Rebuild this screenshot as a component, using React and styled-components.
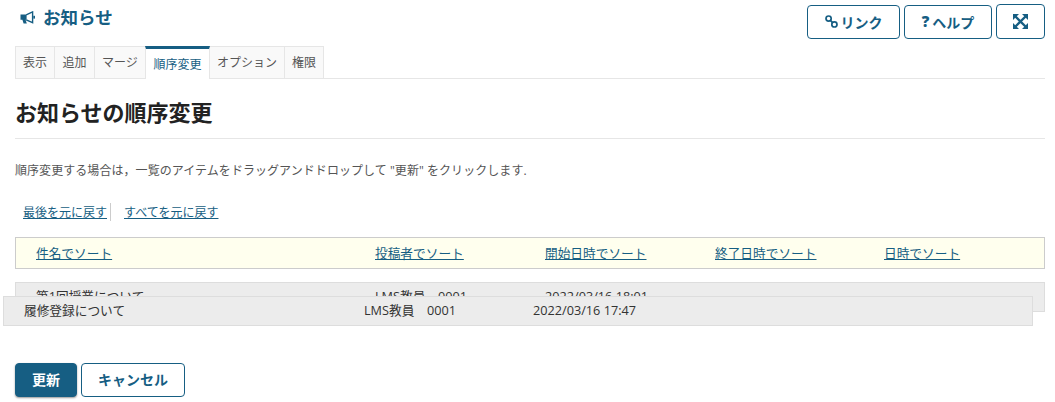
import React from "react";
import styled, { createGlobalStyle } from "styled-components";

const BLUE = "#165e83";

const Global = createGlobalStyle`
  html, body { margin: 0; padding: 0; background: #fff; }
  body {
    font-family: "Open Sans", "Noto Sans CJK JP", sans-serif;
    font-size: 13px;
    color: #333;
  }
  * { box-sizing: border-box; }
`;

const Page = styled.div`
  position: relative;
  width: 1055px;
  height: 402px;
  padding: 0 10px 0 15px;
  overflow: hidden;
`;

const TopBar = styled.header`
  display: flex;
  justify-content: space-between;
  align-items: flex-start;
  height: 46px;
`;

const Title = styled.h1`
  display: flex;
  align-items: center;
  gap: 8px;
  margin: 4px 0 0 5px;
  font-size: 17.5px;
  line-height: 26px;
  font-weight: 700;
  color: ${BLUE};
`;

const TopActions = styled.div`
  display: flex;
  gap: 4px;
  align-items: flex-start;
  padding-top: 4px;
`;

const TopButton = styled.a`
  display: flex;
  align-items: center;
  justify-content: center;
  gap: ${(p) => p.$gap ?? 3}px;
  width: ${(p) => p.$w}px;
  height: ${(p) => p.$h || 34}px;
  margin-top: ${(p) => p.$mt || 0}px;
  padding-bottom: 1px;
  border: 1px solid ${BLUE};
  border-radius: 4px;
  color: ${BLUE};
  font-size: 14px;
  font-weight: 700;
`;

const Question = styled.span`
  font-family: "Open Sans", sans-serif;
  font-weight: 800;
  font-size: 15px;
  line-height: 1;
`;

const Tabs = styled.nav`
  display: flex;
  height: 33px;
  border-bottom: 1px solid #e6e6e6;
`;

const Tab = styled.a`
  position: relative;
  z-index: ${(p) => (p.$active ? 1 : 0)};
  display: flex;
  align-items: center;
  justify-content: center;
  width: ${(p) => p.$w}px;
  height: ${(p) => (p.$active ? 33 : 32)}px;
  margin-left: -1px;
  padding-bottom: ${(p) => (p.$active ? 0 : 1)}px;
  font-size: 12px;
  color: ${(p) => (p.$active ? BLUE : "#555")};
  background: ${(p) => (p.$active ? "#fff" : "#f9f9f9")};
  border: 1px solid #e6e6e6;
  border-bottom: 0;
  border-top: ${(p) => (p.$active ? `3px solid ${BLUE}` : "1px solid #e6e6e6")};
  &:first-child { margin-left: 0; }
`;

const Heading = styled.h2`
  margin: 0;
  height: 60px;
  padding-top: 17px;
  font-size: 22px;
  line-height: 32px;
  font-weight: 700;
  color: #222;
  border-bottom: 1px solid #e6e6e6;
`;

const Intro = styled.p`
  margin: 23px 0 0;
  font-size: 12px;
  line-height: 18px;
  letter-spacing: 0.06px;
  color: #555;
  height: 18px;
`;

const LinkRow = styled.div`
  display: flex;
  align-items: center;
  height: 18px;
  margin-top: 23px;
  padding-left: 8px;
  font-size: 12px;
`;

const TextLink = styled.a`
  color: ${BLUE};
  text-decoration: underline;
  padding-right: ${(p) => (p.$sep ? 3 : 0)}px;
  margin-right: ${(p) => (p.$sep ? 13 : 0)}px;
  border-right: ${(p) => (p.$sep ? "1px solid #ccc" : "none")};
`;

const COLS = "339px 170px 170px 169px 1fr";

const SortHeader = styled.div`
  display: grid;
  grid-template-columns: ${COLS};
  align-items: center;
  height: 32px;
  margin-top: 16px;
  padding: 0 0 2px 20px;
  background: #ffffee;
  border: 1px solid #ccc;
`;

const SortLink = styled.a`
  color: ${BLUE};
  font-size: 12.7px;
  text-decoration: underline;
`;

const ItemList = styled.div`
  height: 81px;
  padding-top: 13px;
`;

const Item = styled.div`
  display: grid;
  grid-template-columns: ${COLS};
  align-items: center;
  height: 30px;
  padding: 0 0 3px 20px;
  background: #ececec;
  border: 1px solid #ddd;
  font-size: 12.7px;
  color: #333;
`;

const DraggedItem = styled(Item)`
  position: absolute;
  left: 3px;
  top: 296px;
  width: 1030px;
  grid-template-columns: 340px 169px 170px 169px 1fr;
`;

const Actions = styled.div`
  display: flex;
  gap: 4px;
  margin-top: 13px;
`;

const Primary = styled.button`
  width: 62px;
  height: 34px;
  padding: 0 0 2px;
  border: 1px solid ${BLUE};
  border-radius: 4px;
  background: ${BLUE};
  color: #fff;
  font: 700 14px "Open Sans", "Noto Sans CJK JP", sans-serif;
  box-shadow: 0 1px 2px rgba(0, 0, 0, 0.4);
`;

const Secondary = styled.button`
  width: 104px;
  height: 34px;
  padding: 0 0 2px;
  border: 1px solid ${BLUE};
  border-radius: 4px;
  background: #fff;
  color: ${BLUE};
  font: 700 14px "Open Sans", "Noto Sans CJK JP", sans-serif;
`;

const BullhornIcon = () => (
  <svg width="15" height="13" viewBox="0 0 15 13" fill="none">
    <path d="M0.5 3.6H6.6V8.8H5.6L6.8 12.6H3.6L2.4 8.8H0.5Z" fill={BLUE} />
    <path d="M6.2 3.8L12.6 0.9V11.7L6.2 8.8" stroke={BLUE} strokeWidth="1.4" />
    <rect x="13.3" y="4.8" width="1.7" height="2.8" fill={BLUE} />
  </svg>
);

const LinkIcon = () => (
  <svg width="13" height="13" viewBox="0 0 13 13" fill="none" stroke={BLUE} strokeWidth="1.7">
    <circle cx="3.6" cy="3.6" r="2.6" />
    <circle cx="9.4" cy="9.4" r="2.6" />
    <path d="M5.4 5.4L7.6 7.6" />
  </svg>
);

const ExpandIcon = () => (
  <svg width="15" height="15" viewBox="0 0 15 15" fill={BLUE} stroke="none">
    <path d="M0 0H6L0 6Z" />
    <path d="M15 0H9L15 6Z" />
    <path d="M0 15H6L0 9Z" />
    <path d="M15 15H9L15 9Z" />
    <path d="M2.5 2.5L12.5 12.5M12.5 2.5L2.5 12.5" stroke={BLUE} strokeWidth="2.4" />
  </svg>
);

const tabs = [
  ["表示", 40],
  ["追加", 41],
  ["マージ", 52],
  ["順序変更", 65, true],
  ["オプション", 76],
  ["権限", 40],
];

const sorts = ["件名でソート", "投稿者でソート", "開始日時でソート", "終了日時でソート", "日時でソート"];

export default function App() {
  return (
    <Page>
      <Global />
      <TopBar>
        <Title>
          <BullhornIcon />
          お知らせ
        </Title>
        <TopActions>
          <TopButton $w={93} $mt={1}>
            <LinkIcon />
            リンク
          </TopButton>
          <TopButton $w={88} $mt={1}>
            <Question>?</Question>
            ヘルプ
          </TopButton>
          <TopButton $w={49} $h={35}>
            <ExpandIcon />
          </TopButton>
        </TopActions>
      </TopBar>
      <Tabs>
        {tabs.map(([label, w, active]) => (
          <Tab key={label} $w={w} $active={active}>
            {label}
          </Tab>
        ))}
      </Tabs>
      <Heading>お知らせの順序変更</Heading>
      <Intro>順序変更する場合は，一覧のアイテムをドラッグアンドドロップして "更新" をクリックします.</Intro>
      <LinkRow>
        <TextLink $sep>最後を元に戻す</TextLink>
        <TextLink>すべてを元に戻す</TextLink>
      </LinkRow>
      <SortHeader>
        {sorts.map((s) => (
          <div key={s}>
            <SortLink>{s}</SortLink>
          </div>
        ))}
      </SortHeader>
      <ItemList>
        <Item>
          <span>第1回授業について</span>
          <span>LMS教員　0001</span>
          <span>2022/03/16 18:01</span>
        </Item>
      </ItemList>
      <DraggedItem>
        <span>履修登録について</span>
        <span>LMS教員　0001</span>
        <span>2022/03/16 17:47</span>
      </DraggedItem>
      <Actions>
        <Primary>更新</Primary>
        <Secondary>キャンセル</Secondary>
      </Actions>
    </Page>
  );
}
